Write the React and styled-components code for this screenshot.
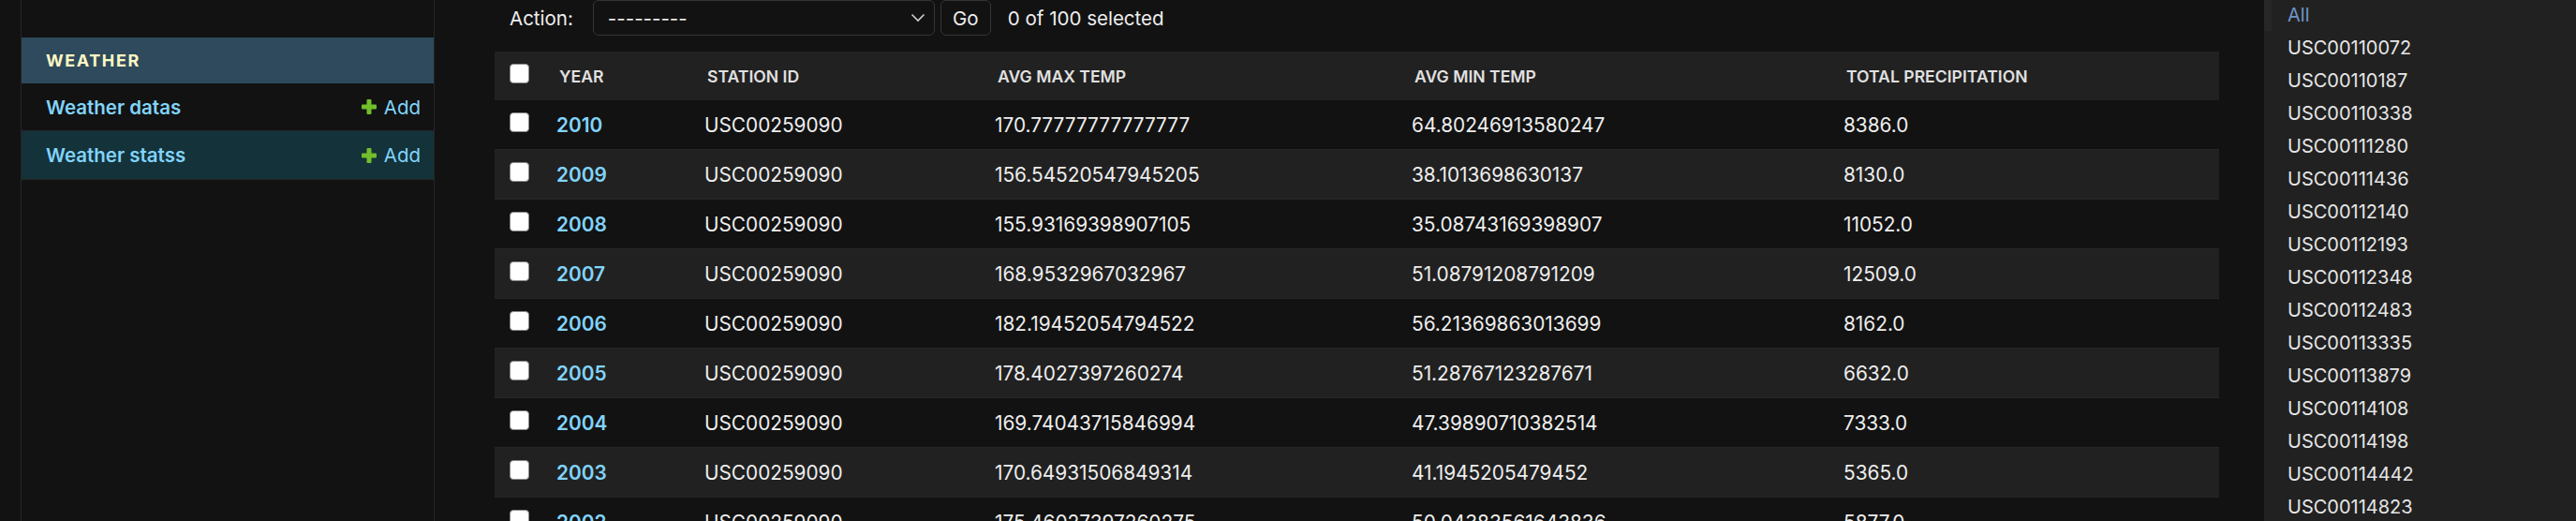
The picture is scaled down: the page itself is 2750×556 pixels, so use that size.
import React from "react";
import styled, { createGlobalStyle } from "styled-components";

const GlobalStyle = createGlobalStyle`
  html, body {
    margin: 0;
    padding: 0;
    height: 556px;
    overflow: hidden;
    background: #121212;
  }
  body {
    font-family: Inter, "Noto Sans", "Liberation Sans", sans-serif;
    color: #eeeeee;
  }
  * {
    box-sizing: border-box;
  }
`;

const Page = styled.div`
  display: flex;
  height: 556px;
  overflow: hidden;
  background: #121212;
`;

const ToggleStrip = styled.div`
  width: 23px;
  flex: none;
  border-right: 1px solid #262626;
`;

const Sidebar = styled.nav`
  width: 441px;
  flex: none;
  padding-top: 40px;
  border-right: 1px solid #262626;
`;

const Caption = styled.div`
  height: 49px;
  display: flex;
  align-items: center;
  padding-left: 26px;
  background: #2e4a5c;
  color: #fdf8c4;
  font-size: 18px;
  font-weight: 700;
  letter-spacing: 1.6px;
  text-transform: uppercase;
`;

const NavRow = styled.div`
  height: ${(p) => (p.$current ? 52 : 51)}px;
  display: flex;
  align-items: center;
  justify-content: space-between;
  padding: 0 14px 0 26px;
  border-bottom: 1px solid #262626;
  background: ${(p) => (p.$current ? "#14323a" : "transparent")};
`;

const NavLink = styled.a`
  color: #81d4fa;
  font-size: 20.5px;
  font-weight: 600;
  text-decoration: none;
`;

const AddLink = styled.a`
  display: flex;
  align-items: center;
  gap: 8px;
  color: #81d4fa;
  font-size: 20.5px;
  text-decoration: none;
`;

const Main = styled.main`
  flex: 1;
  display: flex;
  padding-left: 64px;
  min-width: 0;
`;

const Changelist = styled.section`
  width: 1841px;
  flex: none;
`;

const Actions = styled.div`
  height: 38px;
  display: flex;
  align-items: center;
  padding-left: 16px;
  margin-bottom: 17px;
  font-size: 20.5px;
`;

const ActionLabel = styled.label`
  color: #eeeeee;
  margin-right: 21px;
`;

const Select = styled.div`
  width: 365px;
  height: 38px;
  display: flex;
  align-items: center;
  justify-content: space-between;
  padding: 0 9px 0 15px;
  border: 1px solid #353535;
  border-radius: 6px;
  background: #121212;
  color: #eeeeee;
`;

const GoButton = styled.button`
  width: 54px;
  height: 38px;
  margin-left: 6px;
  border: 1px solid #353535;
  border-radius: 6px;
  background: #121212;
  color: #eeeeee;
  font-family: inherit;
  font-size: 20.5px;
  padding: 0;
`;

const Counter = styled.span`
  margin-left: 18px;
  color: #eeeeee;
`;

const cols = "53px 158px 310px 445px 461px 1fr";

const HeadRow = styled.div`
  display: grid;
  grid-template-columns: ${cols};
  align-items: center;
  height: 52px;
  background: #212121;
  color: #e0e0e0;
  font-size: 17.6px;
  font-weight: 600;
  text-transform: uppercase;
`;

const HeadCell = styled.div`
  padding-left: 16px;
  white-space: nowrap;
`;

const Row = styled.div`
  display: grid;
  grid-template-columns: ${cols};
  align-items: center;
  height: 53px;
  border-bottom: 1px solid #262626;
  background: ${(p) => (p.$even ? "#212121" : "#121212")};
  font-size: 20.8px;
  color: #eeeeee;
`;

const Cell = styled.div`
  padding-left: 13px;
  white-space: nowrap;
`;

const CheckCell = styled.div`
  padding-left: 16px;
  display: flex;
  align-items: center;
  margin-top: -5px;
`;

const Check = styled.input.attrs({ type: "checkbox" })`
  appearance: none;
  width: 21px;
  height: 21px;
  margin: 0;
  border: 1.5px solid #8a8a8a;
  border-radius: 4px;
  background: #ffffff;
`;

const YearLink = styled.a`
  color: #81d4fa;
  font-weight: 600;
  text-decoration: none;
`;

const Filter = styled.aside`
  flex: 1;
  margin-left: 48px;
  background: #212121;
  min-width: 0;
`;

const FilterList = styled.ul`
  list-style: none;
  margin: -2px 0 0;
  padding: 0;
`;

const FilterItem = styled.li`
  height: 35px;
  display: flex;
  align-items: center;
  padding-left: ${(p) => (p.$selected ? 17 : 25)}px;
  border-left: ${(p) => (p.$selected ? "8px solid #272727" : "none")};
  font-size: 20px;
  color: ${(p) => (p.$selected ? "#6f94c6" : "#e6e6e6")};
  white-space: nowrap;
`;

const Chevron = () => (
  <svg width="16" height="10" viewBox="0 0 16 10">
    <polyline points="1.5,1.5 8,8 14.5,1.5" fill="none" stroke="#cfcfcf" strokeWidth="1.6" />
  </svg>
);

const PlusIcon = () => (
  <svg width="16" height="16" viewBox="0 0 16 16">
    <rect x="5.5" y="0" width="5" height="16" rx="1" fill="#70bf2b" />
    <rect x="0" y="5.5" width="16" height="5" rx="1" fill="#70bf2b" />
  </svg>
);

const rows = [
  ["2010", "170.77777777777777", "64.80246913580247", "8386.0"],
  ["2009", "156.54520547945205", "38.1013698630137", "8130.0"],
  ["2008", "155.93169398907105", "35.08743169398907", "11052.0"],
  ["2007", "168.9532967032967", "51.08791208791209", "12509.0"],
  ["2006", "182.19452054794522", "56.21369863013699", "8162.0"],
  ["2005", "178.4027397260274", "51.28767123287671", "6632.0"],
  ["2004", "169.74043715846994", "47.39890710382514", "7333.0"],
  ["2003", "170.64931506849314", "41.1945205479452", "5365.0"],
  ["2002", "175.46027397260275", "50.04383561643836", "5877.0"],
];

const stations = [
  "USC00110072",
  "USC00110187",
  "USC00110338",
  "USC00111280",
  "USC00111436",
  "USC00112140",
  "USC00112193",
  "USC00112348",
  "USC00112483",
  "USC00113335",
  "USC00113879",
  "USC00114108",
  "USC00114198",
  "USC00114442",
  "USC00114823",
  "USC00115079",
];

export default function App() {
  return (
    <>
      <GlobalStyle />
      <Page>
        <ToggleStrip />
        <Sidebar>
          <Caption>Weather</Caption>
          <NavRow>
            <NavLink href="#">Weather datas</NavLink>
            <AddLink href="#">
              <PlusIcon />
              Add
            </AddLink>
          </NavRow>
          <NavRow $current>
            <NavLink href="#">Weather statss</NavLink>
            <AddLink href="#">
              <PlusIcon />
              Add
            </AddLink>
          </NavRow>
        </Sidebar>
        <Main>
          <Changelist>
            <Actions>
              <ActionLabel>Action:</ActionLabel>
              <Select>
                <span>---------</span>
                <Chevron />
              </Select>
              <GoButton>Go</GoButton>
              <Counter>0 of 100 selected</Counter>
            </Actions>
            <HeadRow>
              <CheckCell>
                <Check />
              </CheckCell>
              <HeadCell>Year</HeadCell>
              <HeadCell>Station id</HeadCell>
              <HeadCell>Avg max temp</HeadCell>
              <HeadCell>Avg min temp</HeadCell>
              <HeadCell>Total precipitation</HeadCell>
            </HeadRow>
            {rows.map(([year, max, min, prec], i) => (
              <Row key={year} $even={i % 2 === 1}>
                <CheckCell>
                  <Check />
                </CheckCell>
                <Cell>
                  <YearLink href="#">{year}</YearLink>
                </Cell>
                <Cell>USC00259090</Cell>
                <Cell>{max}</Cell>
                <Cell>{min}</Cell>
                <Cell>{prec}</Cell>
              </Row>
            ))}
          </Changelist>
          <Filter>
            <FilterList>
              <FilterItem $selected>All</FilterItem>
              {stations.map((s) => (
                <FilterItem key={s}>{s}</FilterItem>
              ))}
            </FilterList>
          </Filter>
        </Main>
      </Page>
    </>
  );
}
